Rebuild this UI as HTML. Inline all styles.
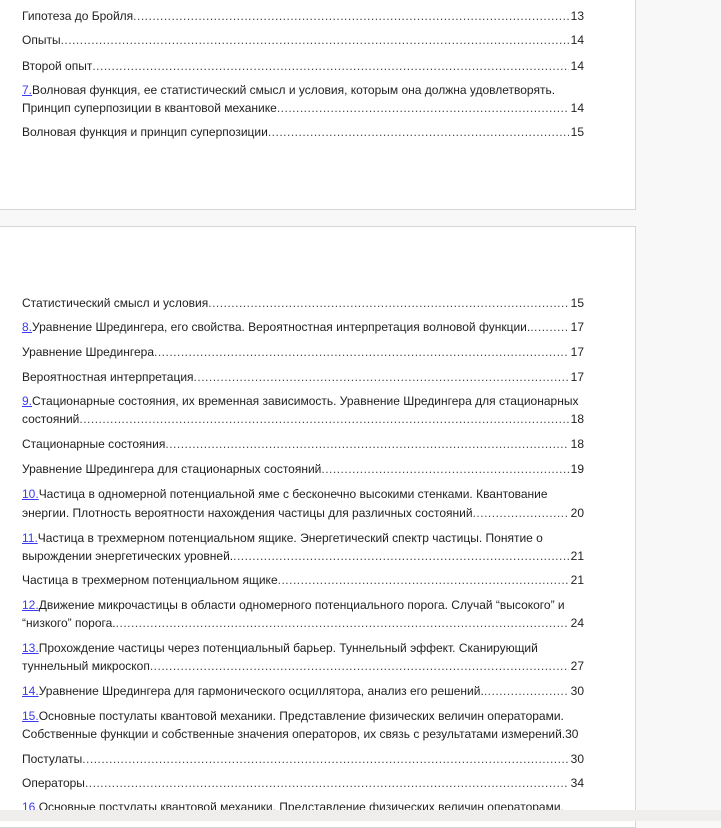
<!DOCTYPE html>
<html><head><meta charset="utf-8"><style>
body{margin:0;width:721px;height:821px;background:#f8f8f8;position:relative;overflow:hidden;font-family:"Liberation Sans",sans-serif;font-size:12px;color:#1f1f1f}
.pg{position:absolute;left:-2px;width:636px;background:#fff;border:1px solid #d6d6d6}
.l{position:absolute;left:22px;width:562px;height:16px;line-height:16px;white-space:nowrap;display:flex}
.l .t{flex:none}
.l .d{flex:1;overflow:hidden;color:#444;letter-spacing:0.5px}
.l .n{flex:none;padding-left:2px}
a{color:#3b3bf0;text-decoration:underline}
.bot{position:absolute;left:0;top:810px;width:721px;height:11px;background:#efeeed}
</style></head><body>
<div class="pg" style="top:-2px;height:210px"></div>
<div class="pg" style="top:226px;height:600px"></div>
<div class="l" style="top:8px"><span class="t">Гипотеза до Бройля </span><span class="d">....................................................................................................................................................</span><span class="n">13</span></div>
<div class="l" style="top:32px"><span class="t">Опыты</span><span class="d">....................................................................................................................................................................</span><span class="n">14</span></div>
<div class="l" style="top:58px"><span class="t">Второй опыт</span><span class="d">....................................................................................................................................................................</span><span class="n">14</span></div>
<div class="l" style="top:82px"><span class="t"><a>7.</a>Волновая функция, ее статистический смысл и условия, которым она должна удовлетворять.</span></div>
<div class="l" style="top:100px"><span class="t">Принцип суперпозиции в квантовой механике</span><span class="d">....................................................................................................................................................</span><span class="n">14</span></div>
<div class="l" style="top:124px"><span class="t">Волновая функция и принцип суперпозиции</span><span class="d">....................................................................................................................................................</span><span class="n">15</span></div>

<div class="l" style="top:295px"><span class="t">Статистический смысл и условия </span><span class="d">....................................................................................................................................................</span><span class="n">15</span></div>
<div class="l" style="top:319px"><span class="t"><a>8.</a>Уравнение Шредингера, его свойства. Вероятностная интерпретация волновой функции. </span><span class="d">..........................</span><span class="n">17</span></div>
<div class="l" style="top:344px"><span class="t">Уравнение Шредингера</span><span class="d">....................................................................................................................................................</span><span class="n">17</span></div>
<div class="l" style="top:369px"><span class="t">Вероятностная интерпретация</span><span class="d">....................................................................................................................................................</span><span class="n">17</span></div>
<div class="l" style="top:393px"><span class="t"><a>9.</a>Стационарные состояния, их временная зависимость. Уравнение Шредингера для стационарных</span></div>
<div class="l" style="top:411px"><span class="t">состояний </span><span class="d">....................................................................................................................................................................</span><span class="n">18</span></div>
<div class="l" style="top:436px"><span class="t">Стационарные состояния</span><span class="d">....................................................................................................................................................</span><span class="n">18</span></div>
<div class="l" style="top:461px"><span class="t">Уравнение Шредингера для стационарных состояний </span><span class="d">....................................................................................................................................................</span><span class="n">19</span></div>
<div class="l" style="top:486px"><span class="t"><a>10.</a>Частица в одномерной потенциальной яме с бесконечно высокими стенками. Квантование</span></div>
<div class="l" style="top:505px"><span class="t">энергии. Плотность вероятности нахождения частицы для различных состояний</span><span class="d">....................................................................</span><span class="n">20</span></div>
<div class="l" style="top:530px"><span class="t"><a>11.</a>Частица в трехмерном потенциальном ящике. Энергетический спектр частицы. Понятие о</span></div>
<div class="l" style="top:548px"><span class="t">вырождении энергетических уровней. </span><span class="d">....................................................................................................................................................</span><span class="n">21</span></div>
<div class="l" style="top:572px"><span class="t">Частица в трехмерном потенциальном ящике</span><span class="d">....................................................................................................................................................</span><span class="n">21</span></div>
<div class="l" style="top:597px"><span class="t"><a>12.</a>Движение микрочастицы в области одномерного потенциального порога. Случай “высокого” и</span></div>
<div class="l" style="top:615px"><span class="t">“низкого” порога. </span><span class="d">....................................................................................................................................................................</span><span class="n">24</span></div>
<div class="l" style="top:640px"><span class="t"><a>13.</a>Прохождение частицы через потенциальный барьер. Туннельный эффект. Сканирующий</span></div>
<div class="l" style="top:658px"><span class="t">туннельный микроскоп</span><span class="d">....................................................................................................................................................................</span><span class="n">27</span></div>
<div class="l" style="top:683px"><span class="t"><a>14.</a>Уравнение Шредингера для гармонического осциллятора, анализ его решений. </span><span class="d">..............................................</span><span class="n">30</span></div>
<div class="l" style="top:708px"><span class="t"><a>15.</a>Основные постулаты квантовой механики. Представление физических величин операторами.</span></div>
<div class="l" style="top:726px"><span class="t">Собственные функции и собственные значения операторов, их связь с результатами измерений.</span><span class="n" style="padding:0">30</span></div>
<div class="l" style="top:751px"><span class="t">Постулаты</span><span class="d">....................................................................................................................................................................</span><span class="n">30</span></div>
<div class="l" style="top:775px"><span class="t">Операторы</span><span class="d">....................................................................................................................................................................</span><span class="n">34</span></div>
<div class="l" style="top:799px;height:11px;overflow:hidden;align-items:flex-start"><span class="t"><a>16.</a>Основные постулаты квантовой механики. Представление физических величин операторами.</span></div>
<div class="bot"></div>
</body></html>
